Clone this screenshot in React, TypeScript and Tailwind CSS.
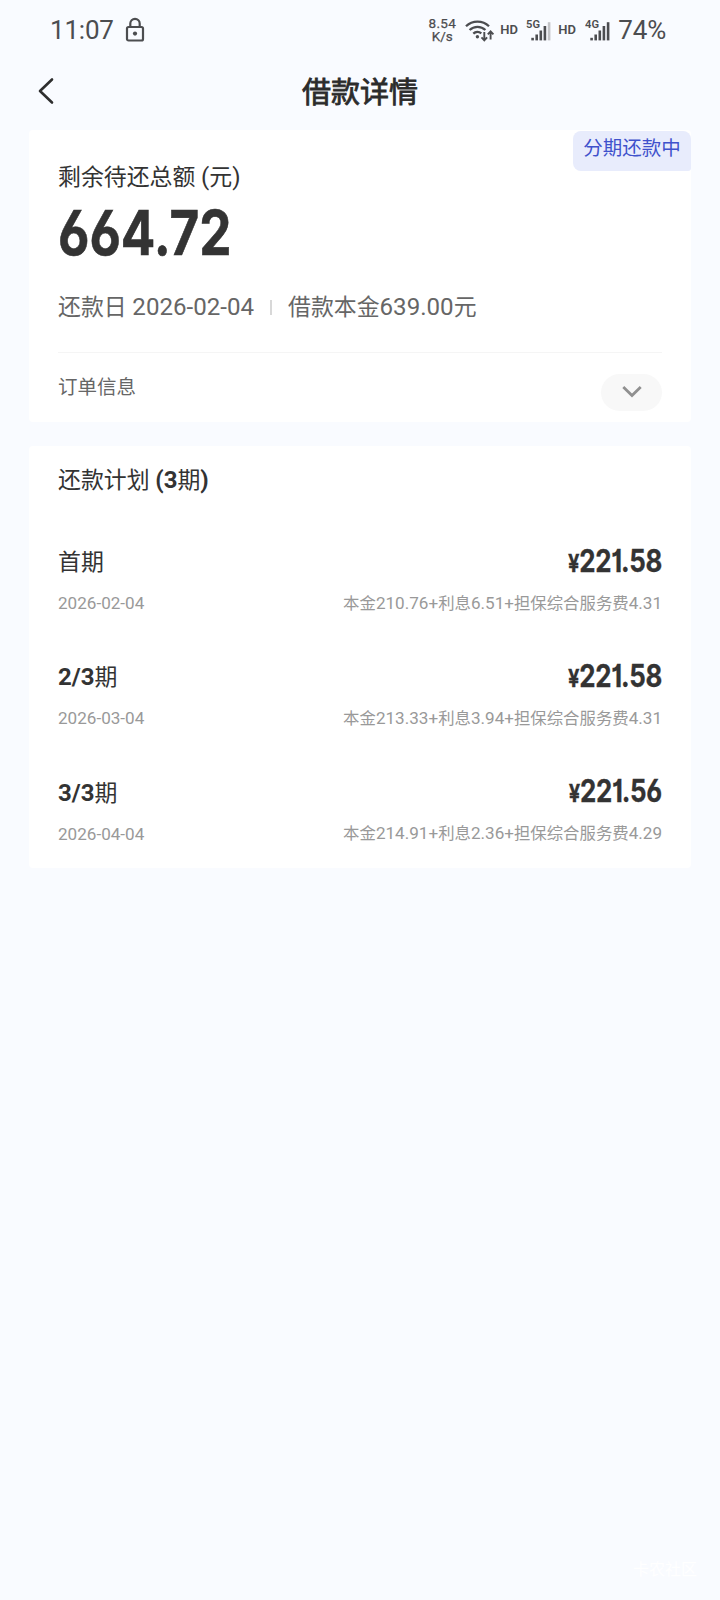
import React from "react";

const installments = [
  { label: "首期", date: "2026-02-04", amount: "221.58", detail: ["210.76", "6.51", "4.31"] },
  { label: "2/3期", date: "2026-03-04", amount: "221.58", detail: ["213.33", "3.94", "4.31"] },
  { label: "3/3期", date: "2026-04-04", amount: "221.56", detail: ["214.91", "2.36", "4.29"] },
];

const openDigits = "font-['Inter','Noto_Sans_CJK_SC',sans-serif] [font-feature-settings:'cv03','cv01']";

function Label({ text }: { text: string }) {
  return (
    <>
      {text.split(/([0-9/()]+)/).map((part, i) =>
        i % 2 ? (
          <span key={i} className="text-[24px] font-bold">
            {part}
          </span>
        ) : (
          part
        ),
      )}
    </>
  );
}

function Num({ children }: { children: React.ReactNode }) {
  return <span className="text-[17.1px]">{children}</span>;
}

function Signal({ tag, weak }: { tag: string; weak?: boolean }) {
  return (
    <svg width="28" height="24" viewBox="0 0 28 24" className="block">
      <text x="0" y="10" fontSize="11.5" fontWeight="600" fontFamily="Roboto" fill="#4c4d50" textLength="14" lengthAdjust="spacingAndGlyphs">
        {tag}
      </text>
      <g fill="#4c4d50">
        <rect x="5.3" y="19.8" width="2.6" height="2.6" />
        <rect x="9.4" y="16.5" width="2.6" height="5.9" />
        <rect x="13.5" y="12.5" width="2.6" height="9.9" />
        <rect x="17.6" y="8" width="2.6" height="14.4" />
        <rect x="21.8" y="4.2" width="2.6" height="18.2" fill={weak ? "#c3c4c7" : "#4c4d50"} />
      </g>
    </svg>
  );
}

function StatusBar() {
  return (
    <div className="flex h-[60px] items-center pr-[54px] pl-[50px] text-[#4c4d50]">
      <span className="text-[26px] leading-[30px] tracking-[-0.2px]">11:07</span>
      <svg width="20" height="26" viewBox="0 0 20 26" className="ml-[11px]" fill="none" stroke="#4c4d50" strokeWidth="2.2">
        <rect x="2" y="10" width="16" height="13.5" rx="1.5" />
        <path d="M5.3 10V6.5a4.7 4.7 0 0 1 9.4 0V10" />
        <circle cx="10" cy="16.6" r="2.1" fill="#4c4d50" stroke="none" />
      </svg>
      <div className="ml-auto flex items-center">
        <div className="w-[30px] text-center text-[13.5px] leading-[13px] [-webkit-text-stroke:0.25px_#4c4d50]">
          <div className="tracking-[0.3px]">8.54</div>
          <div>K/s</div>
        </div>
        <svg width="30" height="24" viewBox="0 0 30 24" className="ml-[8px]" fill="none" stroke="#4c4d50" strokeWidth="2.3">
          <path d="M1 8.2a16.5 16.5 0 0 1 23 0" />
          <path d="M4.6 12a11.3 11.3 0 0 1 15.8 0" />
          <path d="M8.3 15.6a6.2 6.2 0 0 1 8-.3" />
          <circle cx="12.4" cy="18.8" r="1.7" fill="#4c4d50" stroke="none" />
          <path d="M19.3 14v8M16.5 19.3l2.8 3 2.8-3M25.6 21.5v-8M22.8 16.3l2.8-3 2.8 3" strokeWidth="1.9" />
        </svg>
        <span className="ml-[5px] w-[18px] text-[13px] leading-[16px] font-semibold">HD</span>
        <div className="ml-[8px]">
          <Signal tag="5G" weak />
        </div>
        <span className="ml-[4px] w-[18px] text-[13px] leading-[16px] font-semibold">HD</span>
        <div className="ml-[9px]">
          <Signal tag="4G" />
        </div>
        <span className="ml-[5px] text-[26px] leading-[30px] tracking-[-0.2px]">74%</span>
      </div>
    </div>
  );
}

export default function App() {
  return (
    <div className="relative h-[1600px] w-[720px] overflow-hidden bg-[#f9fbff] font-['Roboto','Noto_Sans_CJK_SC',sans-serif] text-[#333333]">
      <StatusBar />
      <header className="grid h-[70px] grid-cols-[1fr_auto_1fr] items-center pb-[9px]">
        <svg width="18" height="28" viewBox="0 0 18 28" className="ml-[37px]" fill="none" stroke="#2e2e2e" strokeWidth="2.6" strokeLinecap="round" strokeLinejoin="round">
          <path d="M15 2.5L3 14l12 11.5" />
        </svg>
        <h1 className="pt-[4px] text-[29px] leading-[40px] font-normal text-[#2b2b2b] [-webkit-text-stroke:0.8px_#2b2b2b]">借款详情</h1>
        <span />
      </header>

      <main className="flex flex-col gap-[24px] pr-[29px] pl-[29px]">
        <section className="relative h-[292px] rounded-[4px] bg-white px-[29px] pt-[31px]">
          <div className="absolute top-[1px] right-0 h-[40px] w-[118px] rounded-l-[8px] rounded-tr-[8px] rounded-br-[3px] bg-[#e8ecfc] text-center text-[19.5px] leading-[36px] text-[#3f52cc]">
            分期还款中
          </div>
          <div className="h-[32px] text-[22.9px] leading-[32px]">
            剩余待还总额 <span className="text-[24px]">(</span>元<span className="text-[24px]">)</span>
          </div>
          <div className={`${openDigits} mt-[10px] h-[60px] w-max origin-left scale-x-[0.825] text-[62px] leading-[60px] font-bold [-webkit-text-stroke:0.6px_#333333]`}>664.72</div>
          <div className="mt-[28px] flex h-[32px] items-center text-[22.9px] leading-[32px] text-[#666666]">
            <span>
              还款日 <span className="text-[24.1px]">2026-02-04</span>
            </span>
            <span className="mr-[16px] ml-[16px] h-[15px] w-[2px] bg-[#d8d8d8]" />
            <span>
              借款本金<span className="text-[24.1px]">639.00</span>元
            </span>
          </div>
          <div className="mt-[29px] h-px bg-[#f5f5f5]" />
          <div className="flex justify-between pt-[20px] text-[#666666]">
            <span className="pt-[1px] text-[19.5px] leading-[28px]">订单信息</span>
            <span className="mt-px flex h-[37px] w-[61px] items-center justify-center rounded-full bg-[#f8f8f8] pb-[2px]">
              <svg width="20" height="12" viewBox="0 0 20 12" fill="none" stroke="#909090" strokeWidth="2.8">
                <path d="M1.3 1L10 9.5 18.7 1" />
              </svg>
            </span>
          </div>
        </section>

        <section className="h-[422px] rounded-[4px] bg-white px-[29px] pt-[18px]">
          <h2 className="h-[32px] text-[22.9px] leading-[32px] font-normal">
            <Label text="还款计划 (3期)" />
          </h2>
          <ul className="pt-[50px]">
            {installments.map((item) => (
              <li key={item.date} className="h-[115.3px]">
                <div className="flex h-[32px] items-center justify-between">
                  <span className="pt-px text-[22.9px] leading-[32px]">
                    <Label text={item.label} />
                  </span>
                  <span className={`${openDigits} origin-right scale-x-[0.84] text-[30.8px] leading-[32px] font-bold tracking-[-0.3px] [-webkit-text-stroke:0.3px_#333333]`}>
                    <span className="text-[24px]">¥</span>
                    {item.amount}
                  </span>
                </div>
                <div className="mt-[13px] flex h-[24px] items-center justify-between text-[16.4px] leading-[24px] text-[#999999]">
                  <Num>{item.date}</Num>
                  <span>
                    本金<Num>{item.detail[0]}+</Num>利息<Num>{item.detail[1]}+</Num>担保综合服务费<Num>{item.detail[2]}</Num>
                  </span>
                </div>
              </li>
            ))}
          </ul>
        </section>
      </main>
      <div className="absolute right-[23px] bottom-[20px] text-[16px] leading-[20px] text-white">卡农社区</div>
    </div>
  );
}
